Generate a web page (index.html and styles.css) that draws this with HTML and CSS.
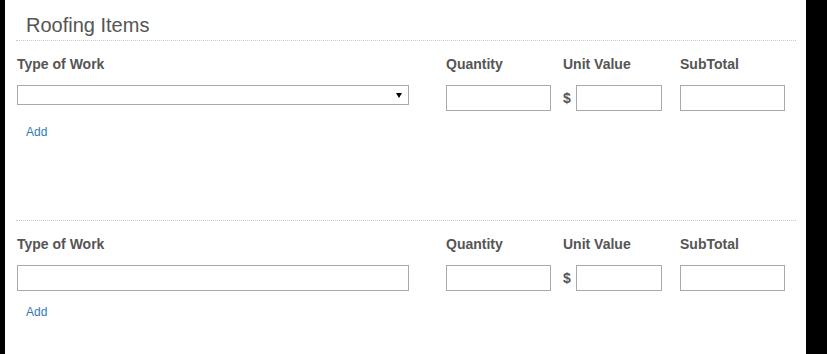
FILE: index.html
```html
<!DOCTYPE html>
<html lang="en">
<head>
<meta charset="utf-8">
<title>Roofing Items</title>
<link rel="stylesheet" href="styles.css">
</head>
<body>
<div class="panel">
  <div class="content">
    <h2 class="title">Roofing Items</h2>
    <section class="item">
      <div class="grid">
        <label class="lbl">Type of Work</label>
        <label class="lbl">Quantity</label>
        <label class="lbl">Unit Value</label>
        <label class="lbl">SubTotal</label>
        <div class="select-wrap"><select class="select"><option></option></select></div>
        <input class="field" type="text">
        <div class="money"><span class="cur">$</span><input class="field" type="text"></div>
        <input class="field" type="text">
      </div>
      <a class="add" href="#">Add</a>
    </section>
    <section class="item item-next">
      <div class="grid">
        <label class="lbl">Type of Work</label>
        <label class="lbl">Quantity</label>
        <label class="lbl">Unit Value</label>
        <label class="lbl">SubTotal</label>
        <input class="field field-wide" type="text">
        <input class="field" type="text">
        <div class="money"><span class="cur">$</span><input class="field" type="text"></div>
        <input class="field" type="text">
      </div>
      <a class="add" href="#">Add</a>
    </section>
  </div>
</div>
</body>
</html>
```

FILE: styles.css
```css
html, body {
  margin: 0;
  padding: 0;
  background: #000;
}
body {
  font-family: "Liberation Sans", Arial, sans-serif;
}
.panel {
  margin-left: 5px;
  width: 801px;
  height: 354px;
  overflow: hidden;
  background: #fff;
}
.content {
  margin: 0 10px 0 11px;
}
.title {
  margin: 0;
  padding: 14px 0 4px 10px;
  font-size: 20px;
  line-height: 22px;
  font-weight: normal;
  color: #555;
  border-bottom: 1px dotted #c8c8c8;
}
.item {
  height: 179px;
  padding-top: 13px;
  box-sizing: border-box;
}
.item-next {
  height: auto;
  border-top: 1px dotted #c8c8c8;
}
.grid {
  display: grid;
  grid-template-columns: 392px 142px 111px 123px;
  row-gap: 11px;
  padding-left: 1px;
  align-items: start;
}
.grid > :nth-child(4n+2) { margin-left: 37px; }
.grid > :nth-child(4n+3) { margin-left: 12px; }
.grid > :nth-child(4n) { margin-left: 18px; }
.lbl {
  font-size: 14px;
  line-height: 20px;
  font-weight: bold;
  color: #555;
}
.field {
  box-sizing: border-box;
  height: 26px;
  width: 105px;
  margin: 0;
  padding: 0 4px;
  border: 1px solid #a9a9a9;
  border-radius: 0;
  background: #fff;
  font: 14px "Liberation Sans", Arial, sans-serif;
  outline: none;
}
.field-wide { width: 392px; }
.money {
  display: flex;
  align-items: center;
  gap: 5px;
}
.money .field { width: 86px; }
.cur {
  font-size: 14px;
  font-weight: bold;
  color: #555;
  width: 8px;
}
.select-wrap {
  position: relative;
  width: 392px;
  height: 20px;
}
.select {
  -webkit-appearance: none;
  appearance: none;
  box-sizing: border-box;
  width: 392px;
  height: 20px;
  margin: 0;
  border: 1px solid #a9a9a9;
  border-radius: 0;
  background: #fff;
  font: 13px "Liberation Sans", Arial, sans-serif;
  outline: none;
}
.select-wrap::after {
  content: "";
  position: absolute;
  left: 379px;
  top: 8px;
  border-left: 3px solid transparent;
  border-right: 3px solid transparent;
  border-top: 5px solid #000;
}
.add {
  display: inline-block;
  margin: 13px 0 0 10px;
  font-size: 12px;
  line-height: 17px;
  color: #337ab7;
  text-decoration: none;
}
```
